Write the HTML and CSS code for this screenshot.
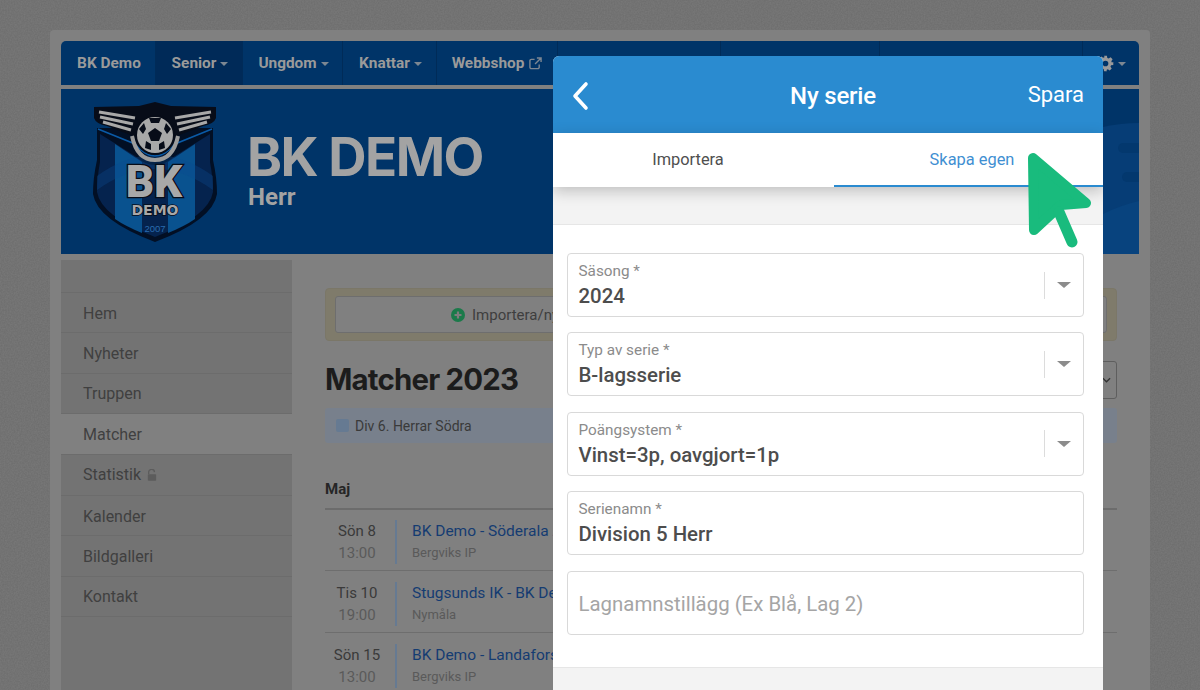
FILE: index.html
```html
<!DOCTYPE html>
<html lang="sv">
<head>
<meta charset="utf-8">
<title>Ny serie</title>
<link rel="stylesheet" href="styles.css">
</head>
<body>
<div class="card">
  <nav class="nav">
    <a class="nav-item brand">BK Demo</a>
    <a class="nav-item active">Senior<i class="caret"></i></a>
    <a class="nav-item">Ungdom<i class="caret"></i></a>
    <a class="nav-item">Knattar<i class="caret"></i></a>
    <a class="nav-item shop">Webbshop
      <svg class="ext" viewBox="0 0 14 14" width="13" height="13"><path d="M11 8v3a1.5 1.5 0 0 1-1.5 1.5h-7A1.5 1.5 0 0 1 1 11V4a1.5 1.5 0 0 1 1.5-1.5H6M8.5 1H13v4.5M13 1 6.5 7.5" fill="none" stroke="currentColor" stroke-width="1.5"/></svg>
    </a>
    <span class="nav-item blank b1"></span>
    <span class="nav-item blank b2"></span>
    <span class="nav-item blank b3"></span>
    <a class="nav-item gear-item">
      <svg class="gear" viewBox="0 0 24 24" width="17" height="17"><path fill="currentColor" fill-rule="evenodd" d="M10 1h4l.6 3.2 1.9.8 2.7-1.8 2.8 2.8-1.8 2.7.8 1.9L23 10v4l-3.2.6-.8 1.9 1.8 2.7-2.8 2.8-2.7-1.8-1.9.8L14 23h-4l-.6-3.2-1.9-.8-2.7 1.8-2.8-2.8 1.8-2.7-.8-1.9L1 14v-4l3.2-.6.8-1.9-1.8-2.7 2.8-2.8 2.7 1.8 1.9-.8zM12 8a4 4 0 1 0 0 8 4 4 0 0 0 0-8z"/></svg><i class="caret"></i>
    </a>
  </nav>

  <header class="banner">
    <svg class="logo" viewBox="0 0 124 140" width="124" height="140">
      <path d="M4 26 H120 L120 58 Q124 76 124 92 Q120 118 62 140 Q4 118 0 92 Q0 76 4 58 Z" fill="#020f24"/>
      <path d="M7 32 L42 54 Q62 72 82 54 L117 32 L117 60 Q120 76 120 90 Q116 114 62 135 Q8 114 4 90 Q4 76 7 60 Z" fill="#05234e"/>
      <path d="M22 42 L49 60 V131 Q32 124 22 117 Z" fill="#09528f"/>
      <path d="M102 42 L75 60 V131 Q92 124 102 117 Z" fill="#09528f"/>
      <path d="M4 88 Q62 46 120 88 L120 74 Q62 32 4 74 Z" fill="#0b4a8f" opacity=".35"/>
      <path d="M5 27 L42 42 Q62 66 82 42 L119 27" fill="none" stroke="#0a5aa6" stroke-width="1.6"/>
      <path d="M1 5 L46 4 L62 0 L78 4 L123 5 V16 Q121 22 110 24 L84 34 Q62 60 40 34 L14 24 Q3 22 1 16 Z" fill="#070c18"/>
      <path d="M6 10 L42 16M7 15 L40 22M10 20 L38 28M118 10 L82 16M117 15 L84 22M114 20 L86 28" stroke="#a8a8a8" stroke-width="3"/>
      <path d="M39 34 Q44 58 62 58 Q80 58 85 34" fill="none" stroke="#9c9c9c" stroke-width="4"/>
      <circle cx="62" cy="33" r="20" fill="#070c18"/>
      <circle cx="62" cy="33" r="18" fill="#a8a8a8"/>
      <path d="M62 26l7 5-3 8h-8l-3-8z" fill="#070c18"/>
      <path d="M56 16h12l-2 5h-8zM46 27l5-6 2 6-3 5zM78 27l-5-6-2 6 3 5zM52 46l1-7 5 3v6zM72 46l-1-7-5 3v6z" fill="#070c18"/>
      <text class="logo-bk" x="61" y="95" text-anchor="middle">BK</text>
      <text class="logo-demo" x="62" y="113" text-anchor="middle">DEMO</text>
      <text class="logo-year" x="62" y="130" text-anchor="middle">2007</text>
    </svg>
    <div class="banner-text">
      <div class="club">BK DEMO</div>
      <div class="team">Herr</div>
    </div>
    <svg class="pattern" viewBox="0 0 36 165" width="36" height="165" aria-hidden="true">
      <path d="M0 38 Q18 34 36 34 V165 H0 Z" fill="#063d76"/>
      <path d="M0 125 Q18 116 36 112 V165 H0 Z" fill="#08437e"/>
      <rect x="15" y="54" width="30" height="10" rx="5" fill="#03386e"/>
      <rect x="19" y="83" width="26" height="10" rx="5" fill="#03386e"/>
    </svg>
  </header>

  <div class="layout">
    <aside class="side">
      <a class="side-item">Hem</a>
      <a class="side-item">Nyheter</a>
      <a class="side-item">Truppen</a>
      <a class="side-item current">Matcher</a>
      <a class="side-item locked">Statistik
        <svg class="lock" viewBox="0 0 12 14" width="10" height="12"><path d="M2 6V4a3.5 3.5 0 0 1 7-.5" fill="none" stroke="currentColor" stroke-width="1.6"/><rect x="1" y="6" width="10" height="8" rx="1" fill="currentColor"/></svg>
      </a>
      <a class="side-item">Kalender</a>
      <a class="side-item">Bildgalleri</a>
      <a class="side-item">Kontakt</a>
    </aside>

    <main class="content">
      <div class="notice">
        <div class="notice-btn">
          <svg class="plus" viewBox="0 0 14 14" width="14" height="14"><circle cx="7" cy="7" r="7" fill="#1b7a4a"/><path d="M7 3.5v7M3.5 7h7" stroke="#7c7c7c" stroke-width="2.2"/></svg>
          Importera/ny serie
        </div>
      </div>
      <div class="title-row">
        <h1 class="page-title">Matcher 2023</h1>
        <span class="year-select"><svg viewBox="0 0 10 6" width="9" height="6"><path d="M1 1l4 4 4-4" fill="none" stroke="#333" stroke-width="1.4"/></svg></span>
      </div>
      <div class="series-tag"><i class="swatch"></i>Div 6. Herrar Södra</div>
      <h2 class="month">Maj</h2>
      <div class="match">
        <div class="when"><span class="day">Sön 8</span><span class="time">13:00</span></div>
        <div class="what"><a class="game">BK Demo - Söderala AIK</a><span class="place">Bergviks IP</span></div>
      </div>
      <div class="match">
        <div class="when"><span class="day">Tis 10</span><span class="time">19:00</span></div>
        <div class="what"><a class="game">Stugsunds IK - BK Demo</a><span class="place">Nymåla</span></div>
      </div>
      <div class="match">
        <div class="when"><span class="day">Sön 15</span><span class="time">13:00</span></div>
        <div class="what"><a class="game">BK Demo - Landafors IK</a><span class="place">Bergviks IP</span></div>
      </div>
    </main>
  </div>
</div>

<section class="modal">
  <header class="modal-head">
    <svg class="back" viewBox="0 0 18 30" width="18" height="30"><path d="M15 3 4 15l11 12" fill="none" stroke="#fff" stroke-width="3.6" stroke-linecap="round" stroke-linejoin="round"/></svg>
    <h2 class="modal-title">Ny serie</h2>
    <span class="save">Spara</span>
  </header>
  <div class="tabs">
    <span class="tab first">Importera</span>
    <span class="tab on">Skapa egen</span>
  </div>
  <div class="gap"></div>
  <form class="form">
    <div class="field select"><div class="field-body"><label class="label">Säsong *</label><div class="value">2024</div></div><i class="sep"></i><i class="arrow"></i></div>
    <div class="field select"><div class="field-body"><label class="label">Typ av serie *</label><div class="value">B-lagsserie</div></div><i class="sep"></i><i class="arrow"></i></div>
    <div class="field select"><div class="field-body"><label class="label">Poängsystem *</label><div class="value">Vinst=3p, oavgjort=1p</div></div><i class="sep"></i><i class="arrow"></i></div>
    <div class="field"><div class="field-body"><label class="label">Serienamn *</label><div class="value">Division 5 Herr</div></div></div>
    <div class="field"><div class="field-body"><div class="placeholder">Lagnamnstillägg (Ex Blå, Lag 2)</div></div></div>
  </form>
  <div class="modal-foot"></div>
</section>

<svg class="pointer" viewBox="0 0 66 98" width="66" height="98" aria-hidden="true">
  <path d="M5 6 L58 51 L33 53 L6 78 Z" fill="#19bb7d" stroke="#19bb7d" stroke-width="10" stroke-linejoin="round"/>
  <path d="M31 60 L44 90" stroke="#19bb7d" stroke-width="11" stroke-linecap="round"/>
</svg>
</body>
</html>
```

FILE: styles.css
```css
* { box-sizing: border-box; }
html, body { margin: 0; height: 690px; overflow: hidden; }
body {
  padding: 30px 50px 0;
  background-color: #7a7a7a;
  background-image: url("data:image/svg+xml,%3Csvg xmlns='http://www.w3.org/2000/svg' width='300' height='300'%3E%3Cfilter id='n'%3E%3CfeTurbulence type='fractalNoise' baseFrequency='.7' numOctaves='2'/%3E%3CfeColorMatrix values='0 0 0 0 0 0 0 0 0 0 0 0 0 0 0 0 0 0 .12 0'/%3E%3C/filter%3E%3Crect width='300' height='300' filter='url(%23n)'/%3E%3C/svg%3E");
  font-family: Roboto, "Liberation Sans", sans-serif;
  color: #4a4a4a;
}
.card {
  height: 660px;
  padding: 11px 11px 0;
  background: #808080;
  border-radius: 4px 4px 0 0;
}

/* top navigation */
.nav {
  display: flex;
  height: 44px;
  background: #003468;
  border-radius: 5px 5px 0 0;
  color: #9a9a9a;
  font-size: 15.4px;
  font-weight: 700;
  overflow: hidden;
}
.nav-item {
  display: flex;
  align-items: center;
  justify-content: center;
  gap: 4px;
  padding-left: 2px;
  border-right: 1px solid #002b58;
  flex: none;
}
.brand { width: 95px; }
.active { width: 87px; background: #002a58; }
.nav-item:nth-child(3) { width: 100px; }
.nav-item:nth-child(4) { width: 94px; }
.shop { width: 121px; gap: 5px; padding-left: 0; }
.b1 { width: 163px; }
.b2 { width: 159px; }
.b3 { width: 203px; }
.gear-item { flex: 1; border-right: 0; justify-content: flex-start; padding-left: 14px; }
.caret {
  width: 0; height: 0;
  margin-top: 2px;
  border: 4px solid transparent;
  border-top-color: #7d8792;
  border-bottom: 0;
}
.ext { color: #7d8792; }

/* banner */
.banner {
  position: relative;
  display: flex;
  align-items: flex-start;
  gap: 30px;
  height: 165px;
  margin-top: 4px;
  padding: 13px 0 0 32px;
  background: #003468;
  overflow: hidden;
}
.logo { flex: none; }
.logo-bk { font: 900 44px Roboto, sans-serif; fill: #a8a8a8; stroke: #070c18; stroke-width: 2.5; paint-order: stroke; }
.logo-demo { font: 700 14px "DejaVu Sans", sans-serif; fill: #a8a8a8; stroke: #070c18; stroke-width: 1.5; paint-order: stroke; }
.logo-year { font: 400 9.5px "Liberation Sans", sans-serif; fill: #2a6cae; }
.banner-text { padding-top: 30px; color: #a3a3a3; }
.club { font: 700 53px/50px Inter, Roboto, sans-serif; letter-spacing: -1.5px; }
.team { font-size: 24px; line-height: 24px; font-weight: 700; margin: 3px 0 0 1px; }
.pattern { position: absolute; right: 0; top: 0; }

/* page body */
.layout { display: flex; height: 430px; margin-top: 6px; }
.side {
  flex: none;
  width: 231px;
  padding-top: 32px;
  background: #737373;
  font-size: 16px;
  color: #404040;
}
.side-item {
  display: flex;
  align-items: center;
  gap: 6px;
  height: 40.4px;
  padding: 1px 0 0 22px;
  border-top: 1px solid #6c6c6c;
}
.locked { height: 41.4px; padding-top: 0; }
.side-item:last-child { border-bottom: 1px solid #6c6c6c; height: 41.4px; }
.current { background: #808080; }
.lock { color: #5c5c5c; }
.content { flex: 1; padding: 28px 22px 0 33px; min-width: 0; }
.notice {
  height: 53px;
  padding: 7px 9px;
  background: #7f7b6b;
  border: 1px solid #7b7768;
  border-radius: 4px;
}
.notice-btn {
  display: flex;
  align-items: center;
  gap: 7px;
  height: 37px;
  padding-left: 115px;
  background: #808080;
  border: 1px solid #6e6e6e;
  border-radius: 3px;
  font-size: 15px;
  color: #3e3e3e;
  white-space: nowrap;
}
.title-row {
  display: flex;
  align-items: center;
  justify-content: space-between;
  height: 67px;
  padding-top: 11px;
}
.page-title {
  margin: 0;
  font: 700 29.4px/34px Inter, Roboto, sans-serif;
  letter-spacing: -.8px;
  color: #1c1c1c;
}
.year-select {
  display: flex;
  align-items: center;
  justify-content: flex-end;
  width: 60px;
  height: 38px;
  padding-right: 5px;
  border: 1px solid #5e5e5e;
  border-radius: 3px;
}
.series-tag {
  display: flex;
  align-items: center;
  height: 35px;
  padding-left: 11px;
  background: #78808c;
  border-radius: 3px;
  font-size: 14px;
  color: #3a3a3a;
}
.swatch { width: 13px; height: 13px; margin-right: 6px; background: #667a92; border-radius: 2px; }
.month {
  height: 26px;
  margin: 34px 0 0;
  font-size: 15px;
  line-height: 24px;
  font-weight: 700;
  color: #262626;
}
.match {
  display: flex;
  height: 62px;
  padding-top: 11px;
  border-top: 1px solid #6e6e6e;
}
.month + .match { border-top: 2px solid #6c6c6c; padding-top: 10px; margin-top: 5px; }
.when {
  display: flex;
  flex-direction: column;
  align-items: center;
  width: 64px;
  margin-right: 6px;
  font-size: 15px;
  line-height: 22px;
}
.day { color: #3a3a3a; }
.time { color: #5a5a5a; }
.what {
  display: flex;
  flex-direction: column;
  height: 44px;
  padding-left: 15px;
  border-left: 2px solid #667a92;
  line-height: 22px;
}
.game { font-size: 15.5px; color: #153c72; white-space: nowrap; }
.place { font-size: 13px; color: #5a5a5a; }

/* modal */
.modal {
  position: absolute;
  top: 56px;
  left: 553px;
  width: 550px;
  height: 634px;
  background: #f3f3f3;
  border-radius: 6px 6px 0 0;
  overflow: hidden;
}
.modal-head {
  position: relative;
  display: flex;
  align-items: center;
  justify-content: center;
  height: 77px;
  padding-left: 10px;
  background: #2a8bd0;
  color: #fff;
}
.back { position: absolute; left: 18px; top: 25px; }
.modal-title { margin: 0; font-size: 24px; font-weight: 500; letter-spacing: -.2px; padding-top: 2px; }
.save { position: absolute; right: 19px; top: 25px; font-size: 22px; line-height: 28px; }
.tabs {
  position: relative;
  display: flex;
  height: 54px;
  background: #fff;
  box-shadow: 0 4px 14px rgba(0, 0, 0, .22);
}
.tab {
  flex: 1;
  padding-top: 17px;
  text-align: center;
  font-size: 16.4px;
  line-height: 20px;
  color: #4f4f4f;
  border-bottom: 2px solid transparent;
}
.first { flex: 0 0 281px; padding-right: 11px; }
.on { padding-left: 7px; color: #3f8fd2; border-bottom-color: #2a8bd0; }
.gap { height: 38px; border-bottom: 1px solid #e6e6e6; }
.form {
  display: flex;
  flex-direction: column;
  gap: 15.4px;
  height: 443px;
  padding: 28px 19px 0 14px;
  background: #fff;
  border-bottom: 1px solid #e6e6e6;
}
.field {
  display: flex;
  align-items: center;
  flex: none;
  height: 64px;
  padding: 0 11px 0 10.5px;
  border: 1px solid #d9d9d9;
  border-radius: 4px;
}
.field-body { flex: 1; min-width: 0; }
.label { display: block; margin-top: 1px; font-size: 15.3px; line-height: 18px; color: #8b8b8b; }
.value { margin-top: 3px; font-size: 20.4px; line-height: 26px; font-weight: 500; color: #4d4d4d; }
.placeholder { padding-top: 2px; font-size: 20.4px; line-height: 26px; color: #a5a5a5; }
.sep { width: 1px; height: 27px; margin-right: 12px; background: #dcdcdc; }
.arrow {
  width: 0; height: 0;
  margin-right: 1px;
  border: 7px solid transparent;
  border-top: 6px solid #8c8c8c;
  border-bottom: 0;
}
.modal-foot { height: 30px; }

/* cursor */
.pointer { position: absolute; left: 1028px; top: 152px; }
```
